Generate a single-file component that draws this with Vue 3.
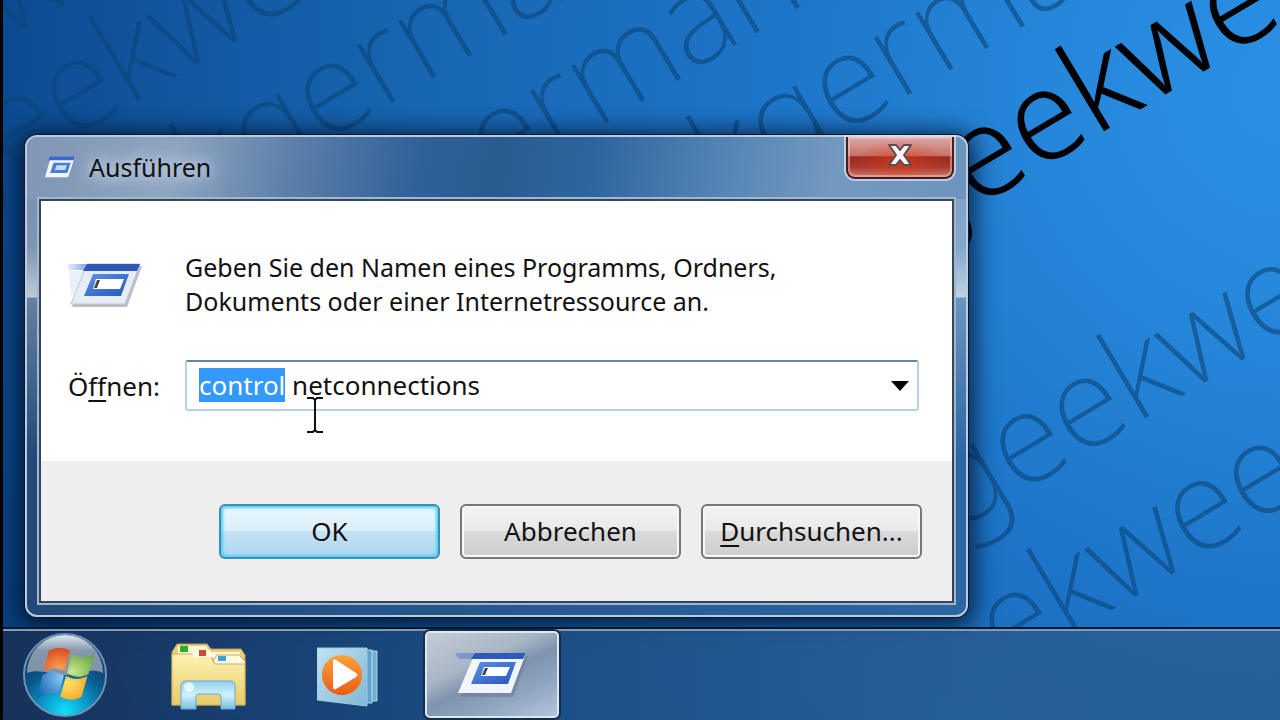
<template>
  <div class="desktop">
    <!-- Hintergrundbild -->
    <svg class="wallpaper" viewBox="0 0 1280 720" preserveAspectRatio="xMidYMid slice" aria-hidden="true">
      <defs>
        <radialGradient id="sky" gradientUnits="userSpaceOnUse" cx="1290" cy="90" r="1480">
          <stop offset="0" stop-color="#2a91e6" />
          <stop offset="0.16" stop-color="#2687da" />
          <stop offset="0.36" stop-color="#1d74c8" />
          <stop offset="0.6" stop-color="#1765b0" />
          <stop offset="0.85" stop-color="#0d4d94" />
          <stop offset="1" stop-color="#053a78" />
        </radialGradient>
      </defs>
      <rect width="1280" height="720" fill="url(#sky)" />
      <g
        v-for="(line, i) in lines"
        :key="i"
        class="slogan"
        :class="{ strong: line.strong }"
        :transform="`translate(${line.x} ${line.y}) rotate(-31)`"
      >
        <text text-anchor="end">{{ line.before }}</text>
        <text>{{ line.after }}</text>
      </g>
    </svg>

    <main class="workspace">
      <form class="dialog" role="dialog" aria-labelledby="dialog-title" @submit.prevent>
        <header class="title-bar">
          <svg class="title-icon" viewBox="0 0 74 56" aria-hidden="true">
            <path d="M16 3h56L56 52H2z" fill="#f2f6fc" />
            <path d="M14 3h58l-3 9H10z" fill="#3c66c4" />
            <path d="M22 18h40l-8 24H14z" fill="#4a7bd6" />
            <path d="M29 24h24l-4 11H25z" fill="#c9dbf7" />
          </svg>
          <h1 id="dialog-title">Ausführen</h1>
          <button type="button" class="close-btn" aria-label="Schließen">
            <svg viewBox="0 0 28 26" aria-hidden="true">
              <path
                d="M3 3h7l4 5 4-5h7l-7 10 7 10h-7l-4-5-4 5H3l7-10z"
                fill="#f6f4f4"
                stroke="#5c4a50"
                stroke-width="2"
                stroke-linejoin="round"
              />
            </svg>
          </button>
        </header>

        <div class="client">
          <div class="content">
            <svg class="run-icon" viewBox="0 -2 74 54" aria-hidden="true">
              <defs>
                <linearGradient id="trail" x1="0" x2="1">
                  <stop offset="0" stop-color="#7da1e0" stop-opacity="0.2" />
                  <stop offset="1" stop-color="#6d94dc" stop-opacity="0.9" />
                </linearGradient>
                <linearGradient id="panel" x1="0" y1="0" x2="1" y2="1">
                  <stop offset="0" stop-color="#5d93e6" />
                  <stop offset="1" stop-color="#2556c0" />
                </linearGradient>
              </defs>
              <path d="M0 5h20l-2 6H0z" fill="url(#trail)" />
              <path d="M1 12h15L6 36H3z" fill="#dfe9f8" opacity="0.7" />
              <path d="M20 7h54L59 48H4z" fill="#8d9299" opacity="0.6" />
              <path d="M19 5h53L57 45H3z" fill="#e6edf6" stroke="#bcc5d0" />
              <path d="M19 5h53l-3 7H15z" fill="#2d58b8" />
              <path d="M25 15h36l-8 22H16z" fill="url(#panel)" />
              <path d="M28 20h28l-4 10H25z" fill="#fff" />
              <path d="M29 21h3l-3 8h-3z" fill="#444" />
            </svg>
            <p class="message">
              Geben Sie den Namen eines Programms, Ordners,<br />
              Dokuments oder einer Internetressource an.
            </p>
            <label class="open-label" for="command">Ö<u>f</u>fnen:</label>
            <div class="combo">
              <input id="command" ref="commandInput" v-model="command" type="text" spellcheck="false" autocomplete="off" />
              <button type="button" class="drop-btn" aria-label="Verlauf anzeigen">
                <svg viewBox="0 0 18 10" aria-hidden="true"><path d="M0 0h18L9 10z" /></svg>
              </button>
            </div>
          </div>
          <footer class="actions">
            <button type="submit" class="btn default">OK</button>
            <button type="button" class="btn">Abbrechen</button>
            <button type="button" class="btn"><u>D</u>urchsuchen...</button>
          </footer>
        </div>
      </form>
    </main>

    <nav class="taskbar">
      <button type="button" class="start-btn" aria-label="Start">
        <svg viewBox="0 0 88 88" aria-hidden="true">
          <defs>
            <radialGradient id="orb" cx="0.5" cy="0.95" r="0.75">
              <stop offset="0" stop-color="#12e0fb" />
              <stop offset="0.35" stop-color="#0b9dcd" />
              <stop offset="0.7" stop-color="#0a5a8e" />
              <stop offset="1" stop-color="#123c66" />
            </radialGradient>
            <linearGradient id="gloss" x1="0" y1="0" x2="0" y2="1">
              <stop offset="0" stop-color="#dfe7ee" />
              <stop offset="0.4" stop-color="#8497ab" />
              <stop offset="1" stop-color="#7d93a8" />
            </linearGradient>
            <radialGradient id="pane-red" cx="0.6" cy="0.9" r="0.9">
              <stop offset="0" stop-color="#f8a552" />
              <stop offset="1" stop-color="#dc4a1c" />
            </radialGradient>
            <radialGradient id="pane-green" cx="0.2" cy="0.8" r="1">
              <stop offset="0" stop-color="#cfe58c" />
              <stop offset="1" stop-color="#5fa53a" />
            </radialGradient>
            <radialGradient id="pane-blue" cx="0.9" cy="0.2" r="1">
              <stop offset="0" stop-color="#8cc4f0" />
              <stop offset="1" stop-color="#1668b4" />
            </radialGradient>
            <radialGradient id="pane-yellow" cx="0.3" cy="0.3" r="0.9">
              <stop offset="0" stop-color="#ffe36a" />
              <stop offset="1" stop-color="#f3a01c" />
            </radialGradient>
          </defs>
          <circle cx="44" cy="44" r="42" fill="url(#orb)" stroke="#6f93b4" stroke-width="2" />
          <path d="M5 42a39 39 0 0 1 78 0c-14-6-25 2-39 2S18 37 5 42z" fill="url(#gloss)" />
          <path d="M27 20c7-5 14-5 22-1l-5 21c-7-4-14-4-22 0z" fill="url(#pane-red)" />
          <path d="M51 22c7 5 14 5 23 1l-6 20c-7 4-14 4-22-1z" fill="url(#pane-green)" />
          <path d="M21 44c7-4 14-4 22 0l-5 20c-7-3-15-2-23 5z" fill="url(#pane-blue)" />
          <path d="M45 45c7 4 14 4 22 0l-6 21c-7 5-14 4-22 0z" fill="url(#pane-yellow)" />
        </svg>
      </button>

      <button type="button" class="task-btn" aria-label="Windows-Explorer">
        <svg width="76" height="70" viewBox="0 0 76 70" aria-hidden="true">
          <defs>
            <linearGradient id="folder" x1="0" y1="0" x2="0" y2="1">
              <stop offset="0" stop-color="#fdf2b4" />
              <stop offset="1" stop-color="#e8cb68" />
            </linearGradient>
            <linearGradient id="stand" x1="0" y1="0" x2="0" y2="1">
              <stop offset="0" stop-color="#8fd2ee" />
              <stop offset="0.5" stop-color="#d2f0fa" />
              <stop offset="1" stop-color="#79bfe0" />
            </linearGradient>
          </defs>
          <path d="M2 10 7 2h30l4 5h30l4 6v50H2z" fill="#e9cf7c" stroke="#b99b4c" />
          <path d="M8 4h28l4 6h30v6H8z" fill="#fdf6d4" />
          <path d="M10 4h8v6h-8z" fill="#22b52c" />
          <path d="M2 12h38l4 9h31v42H2z" fill="url(#folder)" stroke="#c9ad58" />
          <path d="m22 12 4-4h14l3 7H24z" fill="#fffbe6" />
          <path d="M29 8h7v6h-7z" fill="#cf4a2c" />
          <path d="m43 19 4-6h22l6 6v3H45z" fill="#fffbe6" stroke="#c9ad58" />
          <path d="M48 14h8v5h-8z" fill="#3ba0dc" />
          <path
            d="M16 39h44q5 0 5 5v23H51V55q0-3-3-3H29q-3 0-3 3v12H11V44q0-5 5-5z"
            fill="url(#stand)"
            stroke="#63add0"
          />
          <circle cx="19" cy="45" r="5" fill="#fff" opacity="0.7" />
        </svg>
      </button>

      <button type="button" class="task-btn" aria-label="Windows Media Player">
        <svg width="66" height="62" viewBox="0 0 66 62" aria-hidden="true">
          <defs>
            <linearGradient id="case" x1="0" y1="0" x2="1" y2="1">
              <stop offset="0" stop-color="#c3e2f2" />
              <stop offset="1" stop-color="#7fb8d6" />
            </linearGradient>
            <linearGradient id="disc" x1="0" y1="0" x2="0" y2="1">
              <stop offset="0" stop-color="#fba23a" />
              <stop offset="1" stop-color="#ea5d10" />
            </linearGradient>
          </defs>
          <path d="M46 5h14v50H46z" fill="#6fb1d3" stroke="#a6d4e8" />
          <path d="M46 4h9v53h-9z" fill="#5ea3c9" stroke="#b4dced" />
          <path d="M0 2h50v58L0 54z" fill="url(#case)" stroke="#9ccbe2" />
          <circle cx="25" cy="29" r="20" fill="url(#disc)" />
          <path d="M16 16c-1-2 1-3 3-2l20 13c2 1 2 3 0 4L19 43c-2 1-3 0-3-2z" fill="#fff" />
        </svg>
      </button>

      <button type="button" class="task-btn active" aria-label="Ausführen">
        <svg width="74" height="48" viewBox="0 0 74 48" aria-hidden="true">
          <path d="M0 2h22l-2 6H4z" fill="#4a78c4" opacity="0.5" />
          <path d="M20 5h53L58 46H6z" fill="#66758a" opacity="0.5" />
          <path d="M20 2h51L56 42H3z" fill="#f1f5fa" />
          <path d="M20 2h51l-3 6H16z" fill="#2c5ab8" />
          <path d="M25 11h36l-8 22H16z" fill="url(#panel)" />
          <path d="M29 16h26l-4 9H26z" fill="#fff" />
          <path d="M30 17h3l-3 7h-3z" fill="#444" />
        </svg>
      </button>
    </nav>

    <!-- Mauszeiger -->
    <svg class="cursor" width="18" height="36" viewBox="0 0 18 36" aria-hidden="true">
      <path d="M1 1h6l2 2 2-2h6M9 2v32M1 35h6l2-2 2 2h6" fill="none" stroke="#111" stroke-width="2" />
    </svg>
  </div>
</template>

<script setup>
import { ref, onMounted } from 'vue'

const command = ref('control netconnections')
const commandInput = ref(null)

// Schräge Schriftzüge im Hintergrundbild, Ankerpunkt ist jeweils der Fuß eines Buchstabens
const lines = [
  { x: 4, y: 40, before: '', after: 'we' },
  { x: 126, y: 106, before: 'gee', after: 'kwe' },
  { x: 380, y: 109, before: 'kge', after: 'rma' },
  { x: 553, y: 154, before: 'ge', after: 'rman' },
  { x: 897, y: 101, before: 'kge', after: 'rma' },
  { x: 1093, y: 137, before: 'gee', after: 'kwe', strong: true },
  { x: 1134, y: 424, before: 'gee', after: 'kwe' },
  { x: 1064, y: 638, before: 'ee', after: 'kwee' }
]

onMounted(() => {
  // erstes Wort im Eingabefeld markieren
  commandInput.value.focus()
  commandInput.value.setSelectionRange(0, 7)
})
</script>

<style>
body {
  background: #000;
}
</style>

<style scoped>
* {
  box-sizing: border-box;
}

.desktop {
  position: relative;
  display: flex;
  flex-direction: column;
  min-height: 100vh;
  overflow: hidden;
  border-left: 3px solid #000;
  background: #1765b0;
  color: #111;
  font-family: 'Noto Sans', 'Open Sans', sans-serif;
  font-size: 26px;
  line-height: 34px;
}

.wallpaper {
  position: absolute;
  inset: 0;
  width: 100%;
  height: 100%;
}

.slogan {
  fill: #0a4478;
  fill-opacity: 0.6;
  font-family: 'Noto Sans', sans-serif;
  font-size: 126px;
  font-weight: 200;
}

.slogan.strong {
  fill: #000;
  fill-opacity: 1;
  font-weight: 300;
}

.workspace {
  position: relative;
  flex: 1;
  padding: 135px 24px 12px 22px;
}

.dialog {
  width: 77%;
  max-width: 943px;
  padding: 0 12px 12px;
  border: 2px solid #b9cbdd;
  border-radius: 12px;
  background:
    linear-gradient(to bottom, rgba(255, 255, 255, 0.4) 64px, rgba(255, 255, 255, 0.42) 110px, rgba(255, 255, 255, 0.7) 160px, rgba(255, 255, 255, 0.3) 161px, rgba(255, 255, 255, 0) 320px),
    linear-gradient(90deg, #22497a 0%, #255890 50%, #2c66a5 100%);
  box-shadow: 0 0 0 1px #0a1a2c, 0 4px 24px 6px rgba(0, 10, 30, 0.8);
}

.title-bar {
  display: flex;
  align-items: center;
  height: 62px;
  margin: 0 -12px;
  padding: 0 12px 2px 16px;
  border-radius: 10px 10px 0 0;
  background: linear-gradient(100deg, #7f96b4 0%, #8ea4c0 16%, #5d80aa 28%, #2f6098 42%, #2a5b90 50%, #2e659f 60%, #5585b5 74%, #7499c0 86%, #6d94be 100%);
}

.title-icon {
  width: 34px;
  height: 24px;
}

.title-bar h1 {
  margin: 0 auto 0 12px;
  font-size: 25px;
  font-weight: 400;
  line-height: 34px;
  text-shadow: 0 0 12px #d5e0ef, 0 0 20px #c5d3e6, 0 0 30px #b5c8e0;
}

.close-btn {
  align-self: flex-start;
  display: flex;
  align-items: center;
  justify-content: center;
  width: 108px;
  height: 42px;
  padding: 0 0 4px;
  border: 2px solid #4a1a20;
  border-top: 0;
  border-radius: 0 0 9px 9px;
  background:
    radial-gradient(ellipse at 50% 60%, rgba(224, 60, 20, 0.6) 0%, rgba(224, 60, 20, 0) 60%),
    linear-gradient(to bottom, #dca9a6 0%, #c6736c 46%, #9c2a22 50%, #a83a30 75%, #cf7a6c 100%);
  box-shadow: inset 0 0 0 2px rgba(255, 210, 205, 0.45), 0 0 0 2px rgba(220, 232, 244, 0.7);
}

.close-btn svg {
  width: 28px;
  height: 26px;
}

.client {
  border: 2px solid #34465c;
  background: #fff;
  box-shadow: 0 0 0 2px #a2b6cc;
}

.content {
  display: grid;
  grid-template-columns: 117px 1fr;
  align-items: center;
  row-gap: 42px;
  padding: 49px 33px 50px 27px;
}

.run-icon {
  width: 74px;
  height: 54px;
}

.message {
  margin: 0;
  font-size: 25px;
  white-space: nowrap;
}

u {
  text-decoration-thickness: 2px;
  text-underline-offset: 4px;
}

.combo {
  display: flex;
  height: 51px;
  border: 2px solid #b7d0e8;
  border-top-color: #6485a6;
  border-radius: 3px;
  background: #fff;
}

.combo input {
  flex: 1;
  min-width: 0;
  padding: 0 12px 2px;
  border: 0;
  outline: 0;
  background: transparent;
  color: #111;
  font: inherit;
}

.combo input::selection {
  background: #3399ff;
  color: #fff;
}

.drop-btn {
  display: flex;
  align-items: center;
  padding: 0 8px;
  border: 0;
  background: transparent;
}

.drop-btn svg {
  width: 18px;
  height: 10px;
  fill: #000;
}

.actions {
  display: flex;
  justify-content: flex-end;
  gap: 20px;
  padding: 43px 30px 42px;
  background: #eee;
}

.btn {
  width: 221px;
  height: 55px;
  padding: 0 0 2px;
  border: 2px solid #777;
  border-radius: 6px;
  background: linear-gradient(to bottom, #f3f3f3 0%, #e9e9e9 48%, #dadada 50%, #cdcdcd 100%);
  box-shadow: inset 0 0 0 2px #f7f7f7;
  color: #111;
  font: inherit;
}

.btn.default {
  border-color: #3f8db4;
  background: linear-gradient(to bottom, #e9f6fd 0%, #dcf0fb 48%, #c3e2f4 50%, #aed7f0 100%);
  box-shadow: inset 0 0 3px 2px #4fd0f4;
}

.taskbar {
  position: relative;
  display: flex;
  align-items: center;
  gap: 8px;
  height: 91px;
  padding: 0 0 2px 18px;
  border-top: 2px solid #7d9bbb;
  background: linear-gradient(90deg, rgba(25, 48, 84, 0.85) 0%, rgba(28, 72, 124, 0.85) 35%, rgba(42, 92, 148, 0.85) 75%);
  box-shadow: 0 -2px 0 #06182e;
  backdrop-filter: blur(8px);
}

.start-btn {
  width: 88px;
  height: 87px;
  margin-right: 24px;
  padding: 0;
  border: 0;
  border-radius: 50%;
  background: transparent;
}

.start-btn svg {
  display: block;
  height: 86px;
  margin: 0 auto;
}

.task-btn {
  display: flex;
  align-items: center;
  justify-content: center;
  width: 134px;
  height: 87px;
  padding: 4px 0 0;
  border: 0;
  background: transparent;
}

.task-btn.active {
  padding: 0;
  border: 2px solid #dfe7ef;
  border-radius: 5px;
  background: linear-gradient(155deg, #c4ccd6 0%, #a9b6c6 36%, #7d93ae 52%, #8fa5bf 72%, #b2c4d8 100%);
  box-shadow: 0 0 0 2px #152c4c;
}

.cursor {
  position: absolute;
  top: 397px;
  left: 303px;
}
</style>
